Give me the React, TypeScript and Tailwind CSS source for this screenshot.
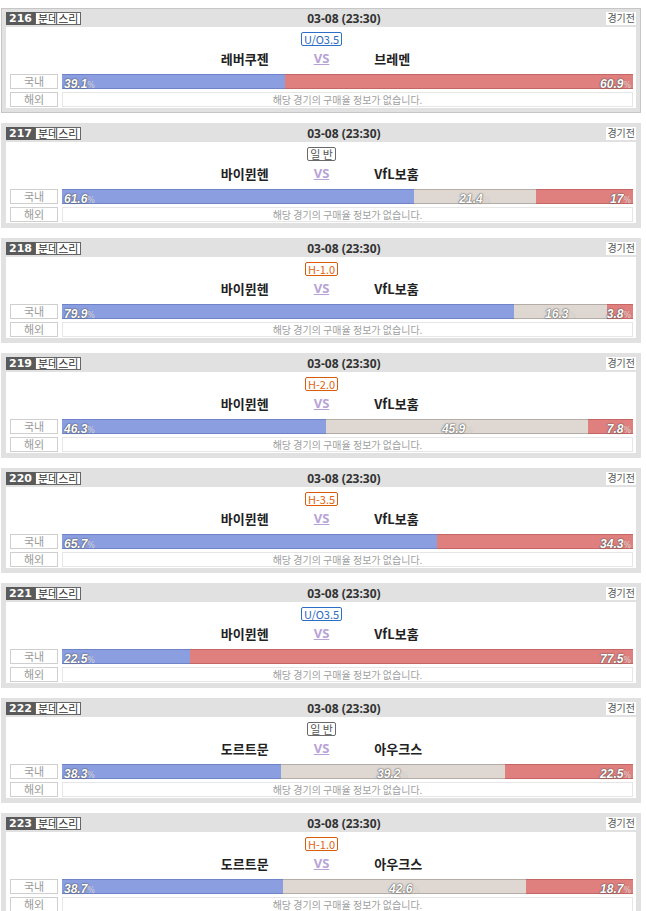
import React from "react";

type Kind = "uo" | "normal" | "hc";
interface Match {
  no: number;
  badge: string;
  kind: Kind;
  home: string;
  away: string;
  w: number;
  d: number | null;
  l: number;
}

const matches: Match[] = [
  { no: 216, badge: "U/O3.5", kind: "uo", home: "레버쿠젠", away: "브레멘", w: 39.1, d: null, l: 60.9 },
  { no: 217, badge: "일 반", kind: "normal", home: "바이뮌헨", away: "VfL보훔", w: 61.6, d: 21.4, l: 17 },
  { no: 218, badge: "H-1.0", kind: "hc", home: "바이뮌헨", away: "VfL보훔", w: 79.9, d: 16.3, l: 3.8 },
  { no: 219, badge: "H-2.0", kind: "hc", home: "바이뮌헨", away: "VfL보훔", w: 46.3, d: 45.9, l: 7.8 },
  { no: 220, badge: "H-3.5", kind: "hc", home: "바이뮌헨", away: "VfL보훔", w: 65.7, d: null, l: 34.3 },
  { no: 221, badge: "U/O3.5", kind: "uo", home: "바이뮌헨", away: "VfL보훔", w: 22.5, d: null, l: 77.5 },
  { no: 222, badge: "일 반", kind: "normal", home: "도르트문", away: "아우크스", w: 38.3, d: 39.2, l: 22.5 },
  { no: 223, badge: "H-1.0", kind: "hc", home: "도르트문", away: "아우크스", w: 38.7, d: 42.6, l: 18.7 },
];

const kr = "font-['Noto_Sans_CJK_KR','Noto_Sans',sans-serif]";

function Badge({ kind, text }: { kind: Kind; text: string }) {
  const cls =
    kind === "uo"
      ? "border-[#2c6fc8] text-[#2a68c0]"
      : kind === "hc"
      ? "border-[#d85c0a] text-[#e0650f]"
      : "border-[#6a6a6a] text-[#555]";
  return (
    <div
      className={`h-[14px] px-[2px] border rounded-[2px] bg-white text-[11px] leading-[12px] flex items-center ${kr} ${cls}`}
    >
      {text}
    </div>
  );
}

function Val({ v }: { v: number }) {
  return (
    <span className="whitespace-nowrap leading-none">
      <span className="text-[12px] font-bold italic text-white font-['Liberation_Sans',Arial,sans-serif] [text-shadow:0_0_1px_#444,0_0_2px_#555]">
        {v}
      </span>
      <span className="text-[8px] text-[#d0d0d0] font-['DejaVu_Sans',sans-serif]">%</span>
    </span>
  );
}

function Bar({ m }: { m: Match }) {
  return (
    <div className="flex-1 h-[15px] flex">
      <div
        className="h-full bg-[#8a9ee0] border-y border-[#6f83c9] flex items-center pl-[2px]"
        style={{ width: `${m.w}%` }}
      >
        <Val v={m.w} />
      </div>
      {m.d !== null && (
        <div
          className="h-full bg-[#dfd7d1] border-y border-[#b5aca6] flex items-center justify-center"
          style={{ width: `${m.d}%` }}
        >
          <Val v={m.d} />
        </div>
      )}
      <div className="h-full flex-1 bg-[#e0807e] border-y border-[#c46664] flex items-center justify-end pr-[2px]">
        <Val v={m.l} />
      </div>
    </div>
  );
}

function Label({ text }: { text: string }) {
  return (
    <div
      className={`w-[48px] h-[15px] shrink-0 border border-[#cfcfcf] bg-white text-[11px] text-[#9a9a9a] flex items-center justify-center leading-none ${kr}`}
    >
      {text}
    </div>
  );
}

function Card({ m, first }: { m: Match; first: boolean }) {
  return (
    <div
      className={`w-[640px] bg-[#e1e1e1] border px-[4px] pb-[4px] ${
        first ? "border-[#c6c6c6]" : "border-[#e1e1e1]"
      }`}
    >
      <div className="h-[18px] flex items-center">
        <div className="flex items-center h-[13px]">
          <div className="h-[13px] px-[3px] bg-[#5a5a5a] text-white text-[11px] font-bold flex items-center leading-none font-['DejaVu_Sans',sans-serif]">
            {m.no}
          </div>
          <div
            className={`h-[13px] px-[2px] bg-white border border-[#666] text-[11px] text-[#333] flex items-center leading-none ${kr}`}
          >
            분데스리
          </div>
        </div>
        <div className="flex-1 pt-[1px] text-center text-[12px] font-bold text-[#333] font-['Noto_Sans','Noto_Sans_CJK_KR',sans-serif]">
          03-08 (23:30)
        </div>
        <div
          className={`h-[13px] px-[1px] bg-white text-[10px] text-[#555] flex items-center leading-none ${kr}`}
        >
          경기전
        </div>
      </div>
      <div className="bg-white pt-[5px] pb-[1px] pl-[4px] pr-[3px]">
        <div className="flex justify-center">
          <Badge kind={m.kind} text={m.badge} />
        </div>
        <div className="flex justify-center items-center h-[17px] mt-[4px]">
          <div className={`w-[150px] text-right text-[13px] font-bold text-[#222] ${kr}`}>{m.home}</div>
          <div className="mx-[45px] text-[13px] font-bold text-[#b7a3d8] underline font-['Noto_Sans',sans-serif]">
            VS
          </div>
          <div className={`w-[150px] text-left text-[13px] font-bold text-[#222] ${kr}`}>{m.away}</div>
        </div>
        <div className="flex items-center gap-[4px] mt-[7px]">
          <Label text="국내" />
          <Bar m={m} />
        </div>
        <div className="flex items-center gap-[4px] mt-[3px]">
          <Label text="해외" />
          <div
            className={`flex-1 h-[15px] border border-[#e6e6e6] text-[10px] text-[#a0a0a0] flex items-center justify-center leading-none ${kr}`}
          >
            해당 경기의 구매율 정보가 없습니다.
          </div>
        </div>
      </div>
    </div>
  );
}

export default function App() {
  return (
    <div className="bg-white min-h-[911px] pt-[8px] pl-[1px] flex flex-col gap-[10px]">
      {matches.map((m, i) => (
        <Card key={m.no} m={m} first={i === 0} />
      ))}
    </div>
  );
}
